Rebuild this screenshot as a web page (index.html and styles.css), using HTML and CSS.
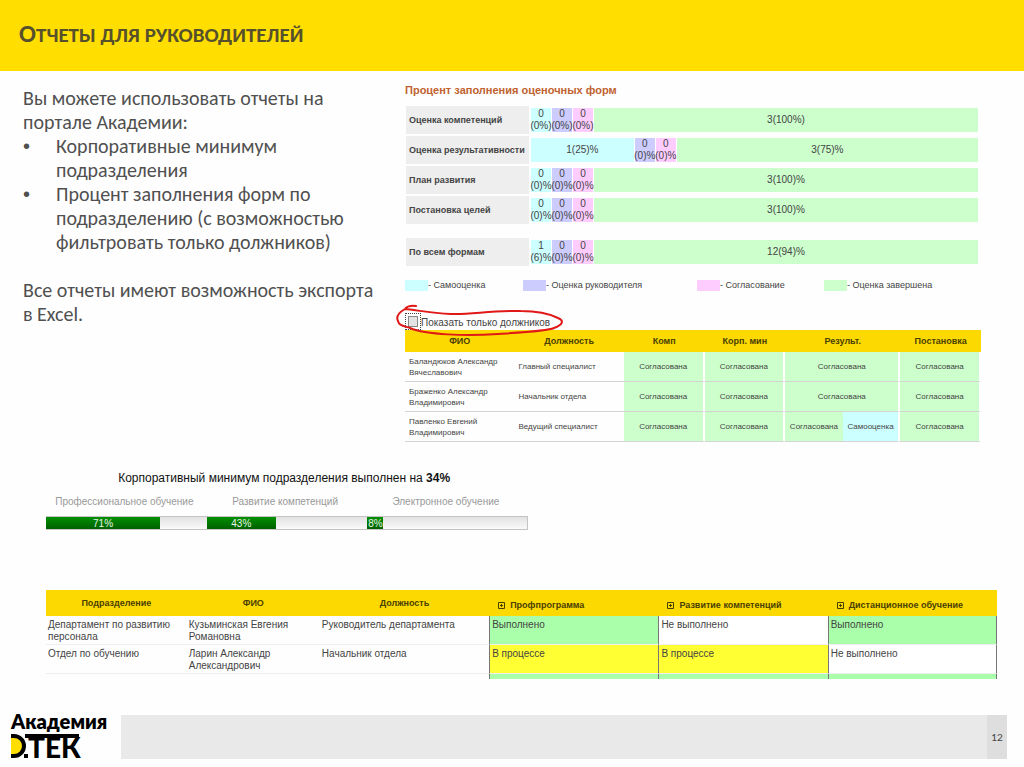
FILE: index.html
```html
<!DOCTYPE html>
<html lang="ru">
<head>
<meta charset="utf-8">
<title>Отчеты для руководителей</title>
<link rel="stylesheet" href="styles.css">
</head>
<body>
<header class="title-bar"><h1>Отчеты для руководителей</h1></header>
<main>
  <div class="top">
    <section class="intro">
      <p>Вы можете использовать отчеты на портале Академии:</p>
      <ul>
        <li>Корпоративные минимум подразделения</li>
        <li>Процент заполнения форм по подразделению (с возможностью фильтровать только должников)</li>
      </ul>
      <p class="export">Все отчеты имеют возможность экспорта в Excel.</p>
    </section>
    <section class="forms">
      <h2>Процент заполнения оценочных форм</h2>
      <div class="chart">
        <div class="chart-row"><div class="name">Оценка компетенций</div><div class="bar"><span class="seg self">0<br>(0%)</span><span class="seg boss">0<br>(0%)</span><span class="seg agree">0<br>(0%)</span><span class="seg done">3(100%)</span></div></div>
        <div class="chart-row"><div class="name">Оценка результативности</div><div class="bar"><span class="seg self quarter">1(25)%</span><span class="seg boss">0<br>(0)%</span><span class="seg agree">0<br>(0)%</span><span class="seg done">3(75)%</span></div></div>
        <div class="chart-row"><div class="name">План развития</div><div class="bar"><span class="seg self">0<br>(0)%</span><span class="seg boss">0<br>(0)%</span><span class="seg agree">0<br>(0)%</span><span class="seg done">3(100)%</span></div></div>
        <div class="chart-row"><div class="name">Постановка целей</div><div class="bar"><span class="seg self">0<br>(0)%</span><span class="seg boss">0<br>(0)%</span><span class="seg agree">0<br>(0)%</span><span class="seg done">3(100)%</span></div></div>
        <div class="chart-row total"><div class="name">По всем формам</div><div class="bar"><span class="seg self">1<br>(6)%</span><span class="seg boss">0<br>(0)%</span><span class="seg agree">0<br>(0)%</span><span class="seg done">12(94)%</span></div></div>
      </div>
      <div class="legend">
        <span><i class="self"></i>- Самооценка</span>
        <span><i class="boss"></i>- Оценка руководителя</span>
        <span><i class="agree"></i>- Согласование</span>
        <span><i class="done"></i>- Оценка завершена</span>
      </div>
      <div class="filter">
        <span class="focus"><input type="checkbox" id="debtors"></span><label for="debtors">Показать только должников</label>
        <svg class="mark" width="170" height="36" viewBox="0 0 170 36" fill="none" stroke="#e01818" stroke-width="2" stroke-linecap="round"><path d="M20 2C14 1 10 3 9 5C2 9 0 13 2 17C3 22 8 22 14 24C30 31 70 32 102 30C132 28 152 27 158 24C166 21 169 17 162 14C152 9 140 7 125 7C95 6 75 11 55 10C35 9 20 6 9 5"/></svg>
      </div>
      <table class="people">
        <colgroup><col class="w19"><col class="w19"><col class="w14"><col class="w14"><col class="w10"><col class="w10"><col class="w14"></colgroup>
        <thead><tr><th>ФИО</th><th>Должность</th><th>Комп</th><th>Корп. мин</th><th colspan="2">Результ.</th><th>Постановка</th></tr></thead>
        <tbody>
          <tr><td>Баландюков Александр Вячеславович</td><td>Главный специалист</td><td class="ok">Согласована</td><td class="ok">Согласована</td><td class="ok" colspan="2">Согласована</td><td class="ok">Согласована</td></tr>
          <tr><td>Браженко Александр Владимирович</td><td>Начальник отдела</td><td class="ok">Согласована</td><td class="ok">Согласована</td><td class="ok" colspan="2">Согласована</td><td class="ok">Согласована</td></tr>
          <tr><td>Павленко Евгений Владимирович</td><td>Ведущий специалист</td><td class="ok">Согласована</td><td class="ok">Согласована</td><td class="ok joined">Согласована</td><td class="ok own">Самооценка</td><td class="ok">Согласована</td></tr>
        </tbody>
      </table>
    </section>
  </div>
  <section class="minimum">
    <h2>Корпоративный минимум подразделения выполнен на <b>34%</b></h2>
    <div class="tracks">
      <div class="track-name">Профессиональное обучение</div><div class="track-name">Развитие компетенций</div><div class="track-name">Электронное обучение</div>
      <div class="track"><div class="fill" style="width:71%">71%</div></div>
      <div class="track"><div class="fill" style="width:43%">43%</div></div>
      <div class="track"><div class="fill" style="width:8%">8%</div></div>
    </div>
  </section>
  <table class="report">
    <colgroup><col class="c1"><col class="c2"><col class="c3"><col class="c3"><col class="c3"><col class="c3"></colgroup>
    <thead><tr><th>Подразделение</th><th>ФИО</th><th>Должность</th>
      <th><button type="button"><svg width="7" height="7" viewBox="0 0 7 7" fill="none" stroke="#4a4000"><path d="M.5.5h6v6h-6zM2 3.5h3M3.5 2v3"/></svg>Профпрограмма</button></th>
      <th><button type="button"><svg width="7" height="7" viewBox="0 0 7 7" fill="none" stroke="#4a4000"><path d="M.5.5h6v6h-6zM2 3.5h3M3.5 2v3"/></svg>Развитие компетенций</button></th>
      <th><button type="button"><svg width="7" height="7" viewBox="0 0 7 7" fill="none" stroke="#4a4000"><path d="M.5.5h6v6h-6zM2 3.5h3M3.5 2v3"/></svg>Дистанционное обучение</button></th></tr></thead>
    <tbody>
      <tr><td>Департамент по развитию персонала</td><td>Кузьминская Евгения Романовна</td><td>Руководитель департамента</td><td class="st yes">Выполнено</td><td class="st">Не выполнено</td><td class="st yes">Выполнено</td></tr>
      <tr><td>Отдел по обучению</td><td>Ларин Александр Александрович</td><td>Начальник отдела</td><td class="st wip">В процессе</td><td class="st wip">В процессе</td><td class="st">Не выполнено</td></tr>
      <tr class="next"><td></td><td></td><td></td><td class="st yes"></td><td class="st yes"></td><td class="st yes"></td></tr>
    </tbody>
  </table>
</main>
<footer>
  <div class="logo">
    <div class="logo-name">Академия</div>
    <svg width="76" height="28" viewBox="0 0 76 28" role="img" aria-label="D.TEK">
      <path d="M0 2H3A10 10 0 0 1 3 22H0Z" fill="#ffde00"/>
      <path d="M0 2H3A10 10 0 0 1 3 22H0" fill="none" stroke="#000" stroke-width="4"/>
      <path d="M13 20h4v4h-4zM14 0h54v4H14z"/>
      <text x="17" y="24" class="logo-word">ТЕК</text>
    </svg>
  </div>
  <div class="foot-bar"><span class="page">12</span></div>
</footer>
</body>
</html>
```
FILE: styles.css
```css
* { box-sizing: border-box; }
body {
  margin: 0;
  min-height: 100vh;
  display: flex;
  flex-direction: column;
  background: #fefefe;
  color: #444;
  font-family: "Liberation Sans", Arial, sans-serif;
  font-size: 10px;
}
h1, h2, p, ul { margin: 0; padding: 0; }
table { border-collapse: separate; border-spacing: 0; table-layout: fixed; width: 100%; }
th, td { padding: 0; }

.title-bar {
  background: #ffde00;
  padding: 16px 19px 18px;
}
.title-bar h1 {
  font: bold 21px/36px Carlito, Lato, "Open Sans", sans-serif;
  text-transform: uppercase;
  color: #57502c;
}
.title-bar h1::first-letter { font-size: 25px; }

main { flex: 1; }
.top {
  display: grid;
  grid-template-columns: 382fr 576fr;
  padding: 12px 43px 0 23px;
}
.intro {
  padding: 3px 20px 0 0;
  font: 20px/24px Carlito, Lato, "Open Sans", sans-serif;
  color: #505050;
}
.intro ul { list-style: none; }
.intro li { position: relative; padding-left: 33px; }
.intro li::before {
  content: "•";
  position: absolute;
  left: 0;
  font-family: "Liberation Sans", sans-serif;
}
.export { margin-top: 24px; }

.forms h2 {
  font-size: 11px;
  line-height: 14px;
  color: #c0622f;
}
.chart {
  display: flex;
  flex-direction: column;
  gap: 2px;
  margin-top: 9px;
}
.chart-row {
  display: grid;
  grid-template-columns: 123px 1fr;
  align-items: center;
  gap: 2px;
  padding: 0 3px 0 1px;
}
.chart-row.total { margin-top: 12px; }
.name {
  display: flex;
  align-items: center;
  height: 28px;
  padding-left: 3px;
  background: #eee;
  font-size: 9px;
  font-weight: bold;
  white-space: nowrap;
}
.bar { display: flex; gap: 1px; height: 24px; }
.seg {
  display: flex;
  flex-direction: column;
  justify-content: center;
  align-items: center;
  flex: none;
  width: 20px;
  line-height: 12px;
  text-align: center;
  white-space: nowrap;
}
.seg.quarter { width: 23%; }
.seg.done { flex: 1; }
.self { background: #ccffff; }
.boss { background: #ccccff; }
.agree { background: #ffccff; }
.done { background: #ccffcc; }

.legend {
  display: grid;
  grid-template-columns: 118fr 174fr 127fr 157fr;
  margin-top: 13px;
  line-height: 12px;
  font-size: 9px;
}
.legend span { display: flex; align-items: center; }
.legend i { width: 23px; height: 11px; }

.filter {
  position: relative;
  display: flex;
  align-items: flex-end;
  margin-top: 22px;
  line-height: 15px;
}
.focus {
  display: flex;
  padding: 2px;
  border: 1px dotted #444;
}
.focus input {
  appearance: none;
  width: 10px;
  height: 11px;
  margin: 0;
  border: 1px solid #888;
  background: #e4e4e4;
}
.mark { position: absolute; left: -9px; top: -9px; }

.w19 { width: 19%; }
.w14 { width: 14%; }
.w10 { width: 10%; }
.people { font-size: 8px; line-height: 11px; }
.people th {
  height: 22px;
  background: #fcd900;
  color: #4a4000;
  font-size: 9px;
}
.people td {
  height: 30px;
  padding: 0 4px;
  border-bottom: 1px solid #d4d4d4;
}
.people .ok {
  padding: 0;
  text-align: center;
  background: #ccffcc;
  border-right: 2px solid #fff;
}
.people .joined { border-right: 0; }
.people .own { background: #ccffff; }

.minimum {
  width: calc(51% + 6px);
  padding-left: 46px;
  margin-top: 27px;
}
.minimum h2 {
  padding-right: 6px;
  font-size: 12px;
  font-weight: normal;
  line-height: 18px;
  text-align: center;
  color: #111;
}
.tracks {
  display: grid;
  grid-template-columns: 1fr 1fr 1fr;
  margin-top: 9px;
}
.track-name {
  padding-right: 4px;
  margin-bottom: 8px;
  text-align: center;
  line-height: 12px;
  color: #999;
}
.track {
  height: 14px;
  border: 1px solid #c4c4c4;
  border-width: 1px 0;
  background: linear-gradient(#e2e2e2, #fafafa);
}
.track:last-child { border-right-width: 1px; }
.fill {
  height: 12px;
  min-width: 16px;
  line-height: 13px;
  text-align: center;
  color: #e8f4e8;
  background: linear-gradient(#009000, #006000);
}

.report {
  width: calc(100% - 73px);
  margin: 60px 27px 0 46px;
  line-height: 12px;
}
.c1 { width: 14.8%; }
.c2 { width: 14%; }
.c3 { width: 17.8%; }
.report th {
  height: 26px;
  background: #fcd900;
  color: #4a4000;
  font-size: 9px;
}
.report button {
  display: flex;
  align-items: center;
  gap: 5px;
  margin: 4px 0 0 9px;
  padding: 0;
  border: 0;
  background: none;
  color: inherit;
  font: inherit;
}
.report td {
  height: 29px;
  padding: 3px 2px 1px;
  vertical-align: top;
  border-bottom: 1px solid #eee;
}
.report .st {
  border-left: 1px solid #777;
  background: #fff;
}
.report .st:last-child { border-right: 1px solid #777; }
.report .yes { background: #aaffaa; }
.report .wip { background: #ffff33; }
.report .next td { height: 5px; padding: 0; border-bottom: 0; }

footer {
  display: flex;
  align-items: flex-start;
  padding: 0 17px 8px 11px;
}
.logo { width: 110px; height: 52px; margin-bottom: -4px; color: #000; }
.logo-name {
  font: 800 20px/20px Lato, "Open Sans", sans-serif;
  margin-bottom: 3px;
}
.logo svg { display: block; overflow: visible; }
.logo-word { font: 900 28px Lato, sans-serif; }
.foot-bar {
  display: flex;
  flex: 1;
  justify-content: flex-end;
  height: 44px;
  margin-top: 4px;
  background: #e9e9e9;
}
.page {
  width: 20px;
  line-height: 44px;
  text-align: center;
  background: #dedede;
  font-family: Lato, "Open Sans", sans-serif;
}
```
